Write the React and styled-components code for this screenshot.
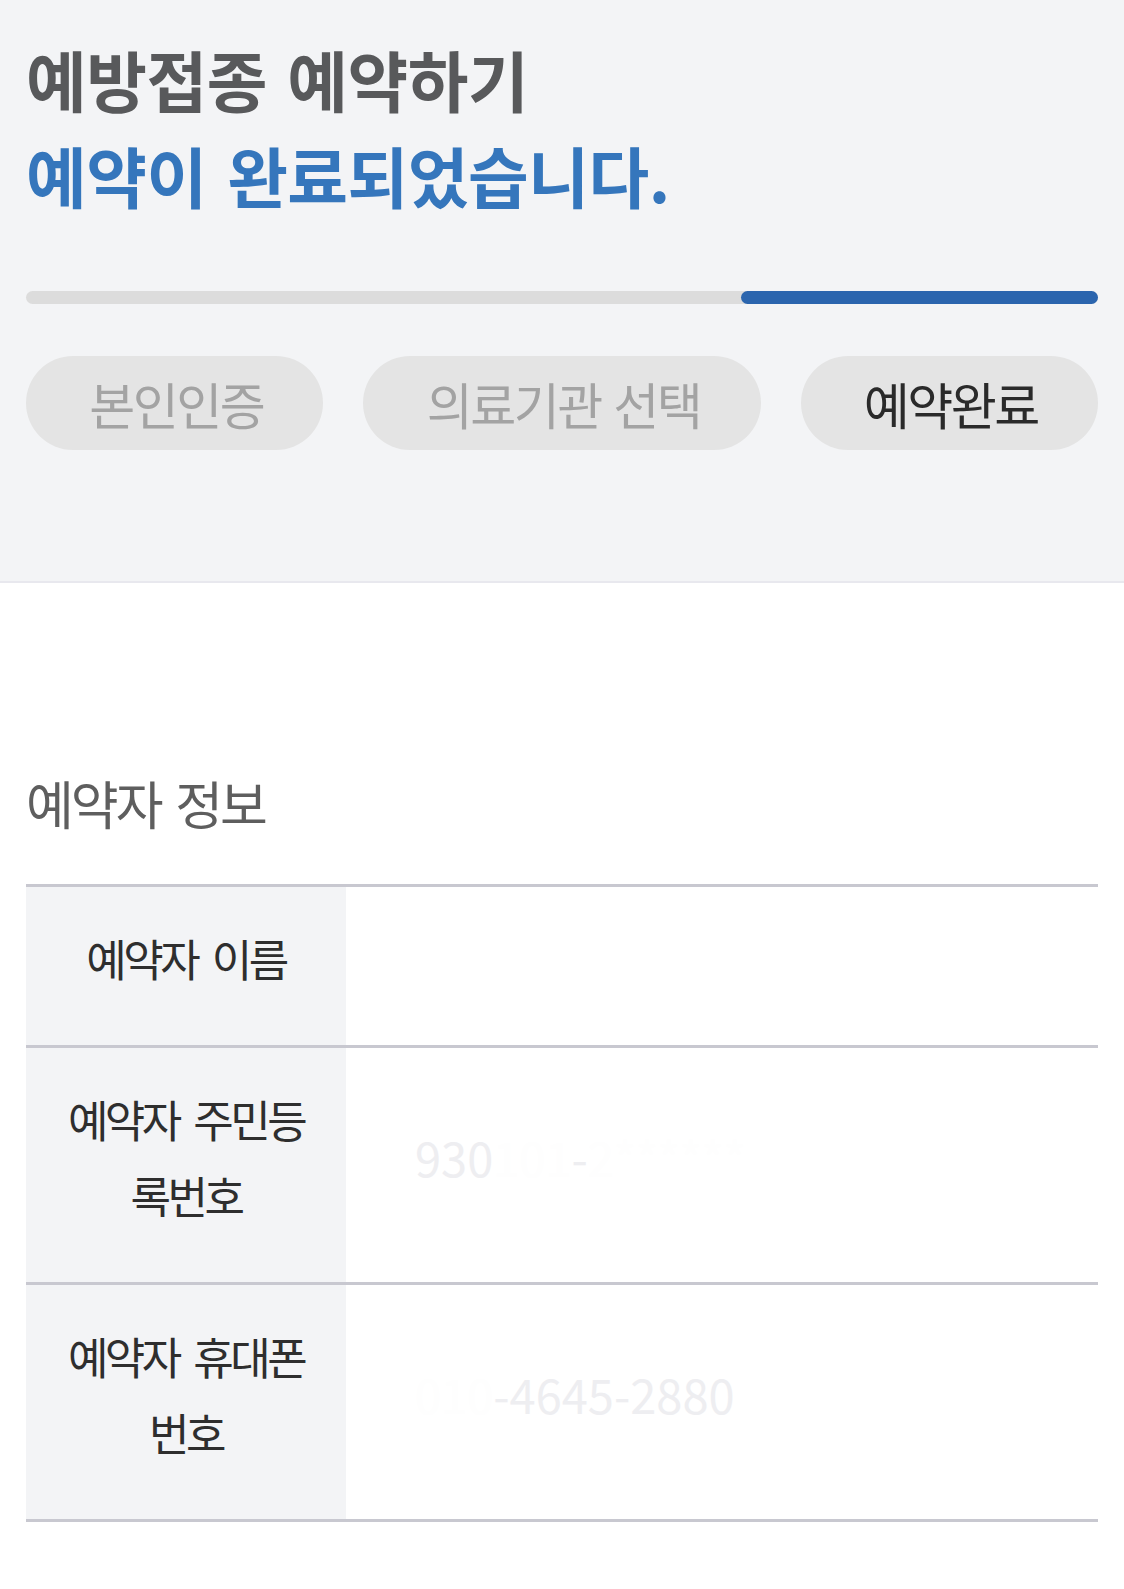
import React from "react";
import styled, { createGlobalStyle } from "styled-components";

const GlobalStyle = createGlobalStyle`
  html, body {
    margin: 0;
    padding: 0;
    background: #ffffff;
  }
  body {
    font-family: "Noto Sans CJK KR", "Noto Sans", sans-serif;
    -webkit-font-smoothing: antialiased;
  }
  * { box-sizing: border-box; }
`;

const Page = styled.div`
  width: 100%;
  background: #ffffff;
  padding-bottom: 67px;
`;

const Header = styled.header`
  background: #f3f4f6;
  border-bottom: 2px solid #e8e8ee;
  padding: 30px 26px 131px;
`;

const Title = styled.h1`
  margin: 0;
  font-size: 66px;
  line-height: 96px;
  font-weight: 700;
  letter-spacing: -0.5px;
  word-spacing: 6px;
  color: #58595b;
`;

const TitleAccent = styled.span`
  display: block;
  color: #3576bc;
`;

const Progress = styled.div`
  margin-top: 69px;
  height: 13px;
  border-radius: 7px;
  background: #dcdcdc;
  display: flex;
`;

const ProgressFill = styled.div`
  margin-left: ${(p) => p.$offset}%;
  width: ${(p) => p.$size}%;
  border-radius: 7px;
  background: #2b65ae;
`;

const Steps = styled.div`
  margin-top: 52px;
  display: flex;
  gap: 40px;
`;

const Step = styled.div`
  flex: 1 1 auto;
  height: 94px;
  border-radius: 47px;
  background: #e4e4e4;
  display: flex;
  align-items: center;
  justify-content: center;
  padding: 0 40px 0 43px;
  font-size: 50px;
  letter-spacing: -2.5px;
  word-spacing: 4px;
  font-weight: 400;
  color: ${(p) => (p.$active ? "#2a2a2a" : "#a3a3a3")};
`;

const Section = styled.section`
  padding: 190px 26px 0;
`;

const SectionTitle = styled.h2`
  margin: 0;
  font-size: 52px;
  line-height: 76px;
  margin-top: -8px;
  margin-bottom: -8px;
  font-weight: 400;
  letter-spacing: -3px;
  word-spacing: 6px;
  color: #5e5e5e;
`;

const InfoTable = styled.div`
  margin-top: 51px;
  border-top: 3px solid #c8c8d0;
`;

const Row = styled.div`
  display: grid;
  grid-template-columns: 320px 1fr;
  border-bottom: 3px solid #c8c8d0;
`;

const Label = styled.div`
  background: #f3f4f6;
  padding: 33px 32px 49px;
  text-align: center;
  font-size: 44px;
  line-height: 76px;
  letter-spacing: -3.5px;
  word-spacing: 8px;
  color: #2e2e2e;
`;

const Value = styled.div`
  display: flex;
  align-items: center;
  padding: 0 0 18px 69px;
  font-size: 47px;
  color: #eeeef0;
`;

const Ink = styled.span`
  color: ${(p) => (p.$hidden ? "#fefefe" : "#eeeef1")};
`;

const steps = [
  { label: "본인인증", active: false },
  { label: "의료기관 선택", active: false },
  { label: "예약완료", active: true },
];

const rows = [
  { label: "예약자 이름", value: [] },
  {
    label: "예약자 주민등록번호",
    value: [
      { t: "930", hidden: false },
      { t: "101", hidden: true },
      { t: "-", hidden: false },
      { t: "2******", hidden: true },
    ],
  },
  {
    label: "예약자 휴대폰 번호",
    value: [
      { t: "010", hidden: true },
      { t: "-4645-2880", hidden: false },
    ],
  },
];

export default function App() {
  const current = 3;
  const total = steps.length;
  return (
    <Page>
      <GlobalStyle />
      <Header>
        <Title>
          예방접종 예약하기
          <TitleAccent>예약이 완료되었습니다.</TitleAccent>
        </Title>
        <Progress>
          <ProgressFill
            $offset={((current - 1) / total) * 100}
            $size={100 / total}
          />
        </Progress>
        <Steps>
          {steps.map((s) => (
            <Step key={s.label} $active={s.active}>
              {s.label}
            </Step>
          ))}
        </Steps>
      </Header>
      <Section>
        <SectionTitle>예약자 정보</SectionTitle>
        <InfoTable>
          {rows.map((r) => (
            <Row key={r.label}>
              <Label>{r.label}</Label>
              <Value>
                {r.value.map((v, i) => (
                  <Ink key={i} $hidden={v.hidden}>
                    {v.t}
                  </Ink>
                ))}
              </Value>
            </Row>
          ))}
        </InfoTable>
      </Section>
    </Page>
  );
}
